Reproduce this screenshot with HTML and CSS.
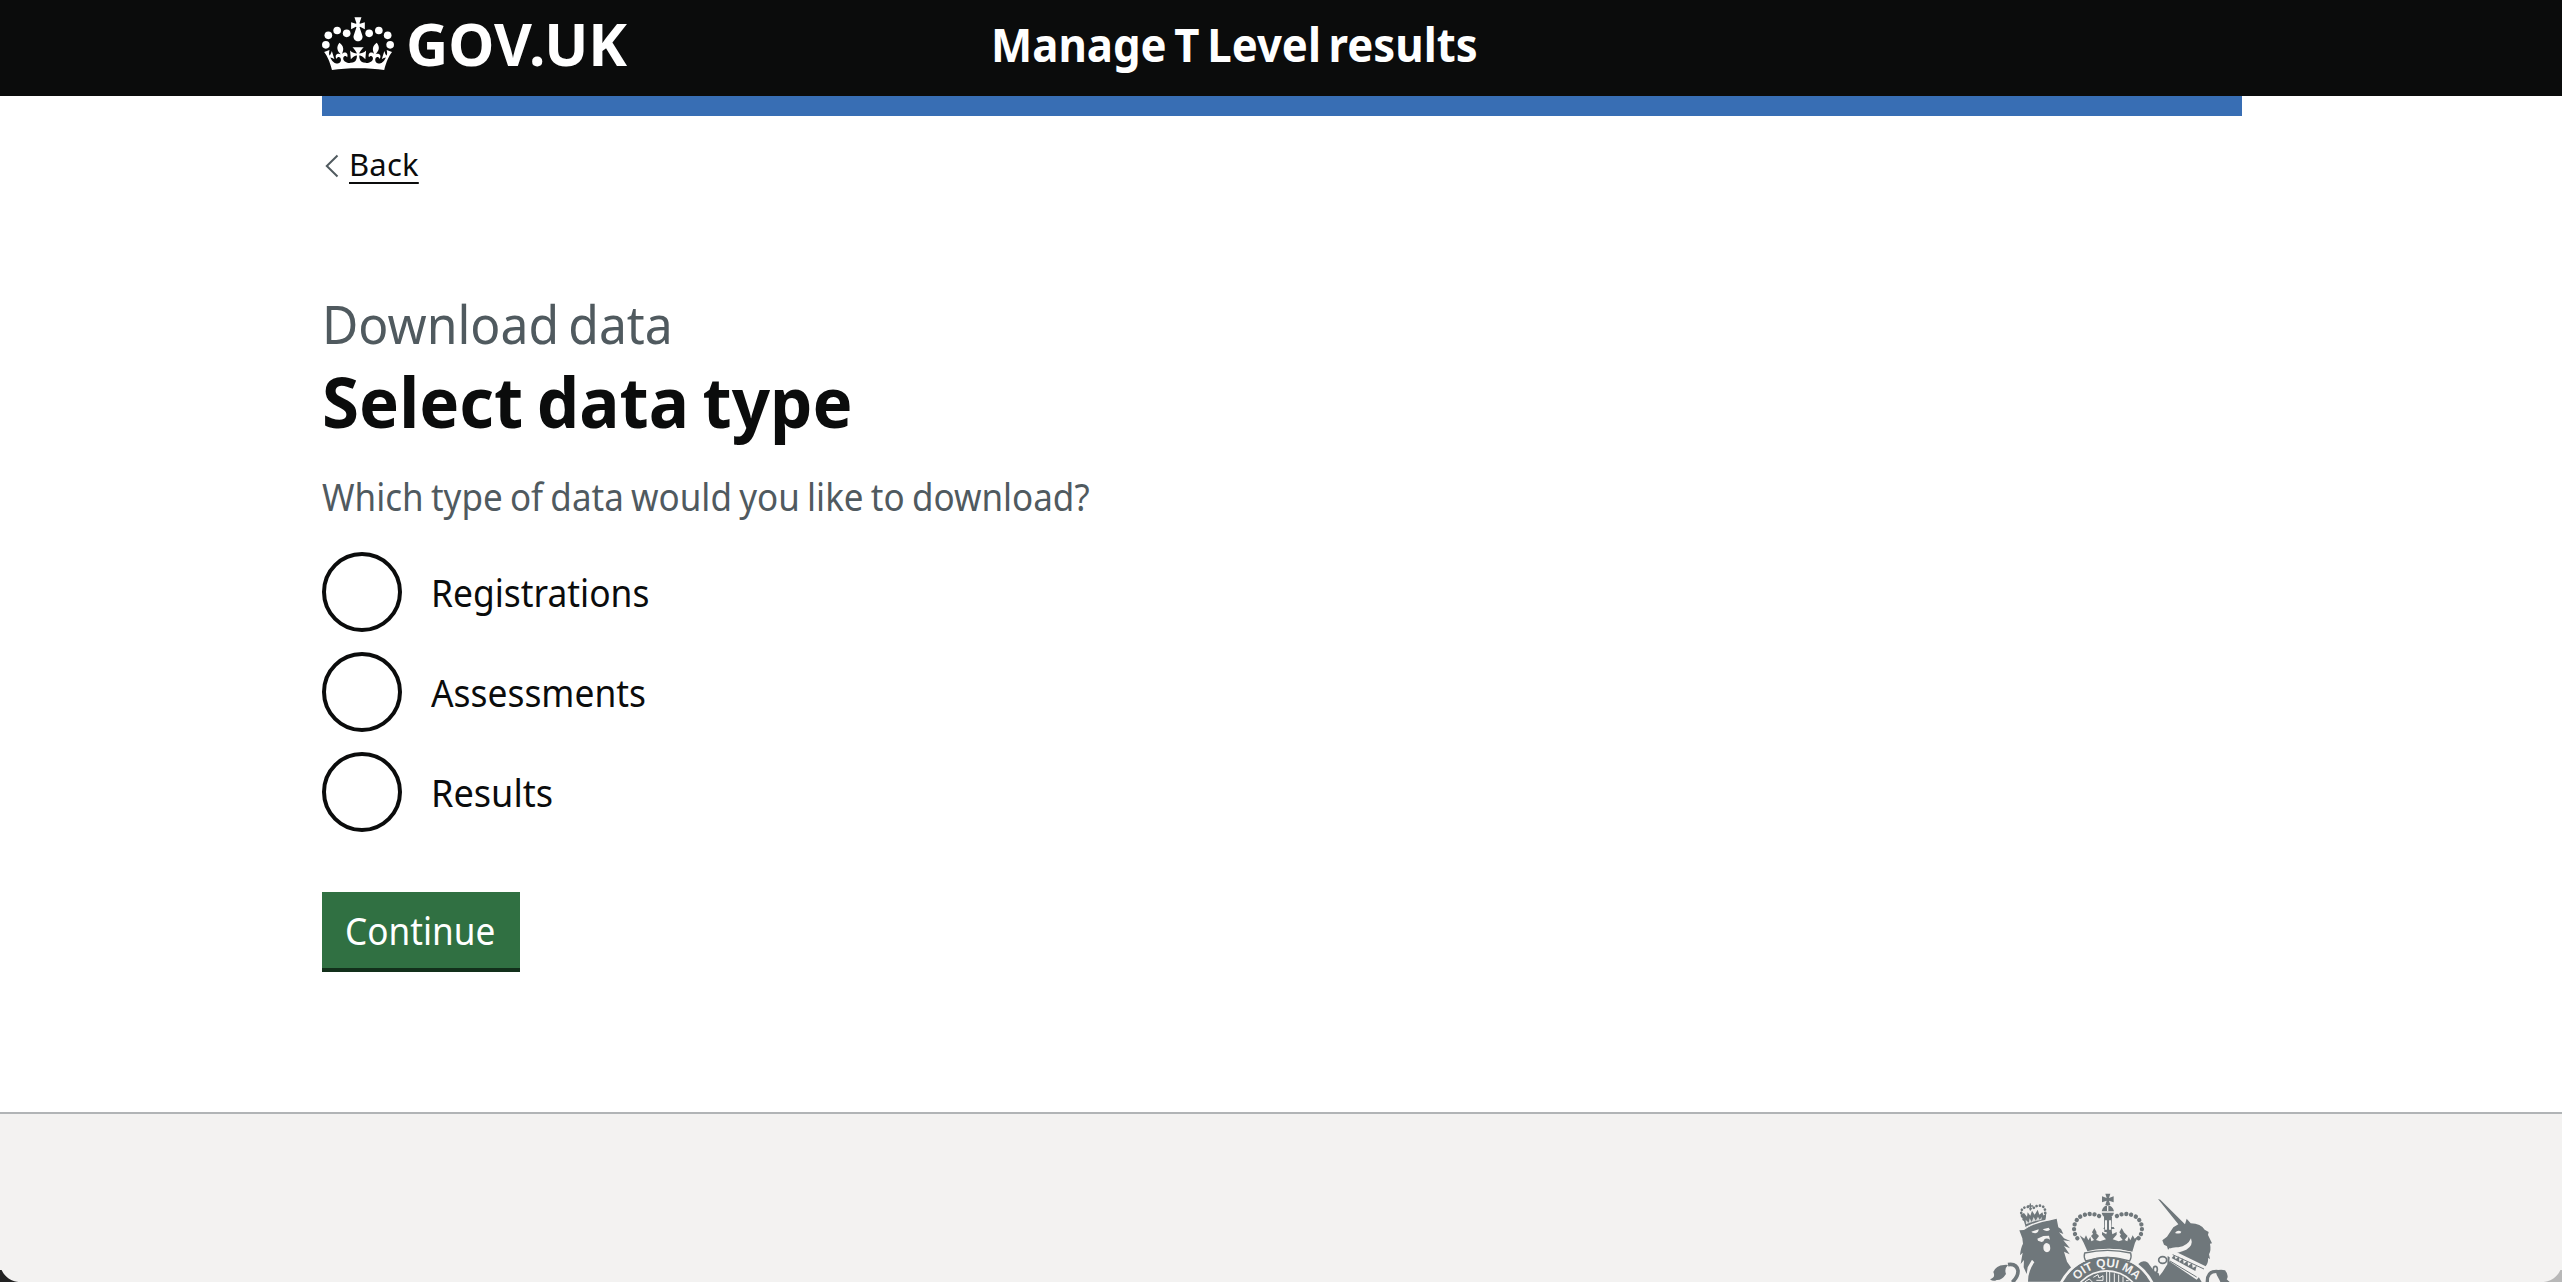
FILE: index.html
```
<!DOCTYPE html>
<html lang="en">
<head>
<meta charset="utf-8">
<title>Select data type - Manage T Level results</title>
<link rel="stylesheet" href="styles.css">
</head>
<body>
<header class="header">
  <a class="logo" aria-label="GOV.UK">
    <svg class="crown" viewBox="66 51 216 159" fill="currentColor" aria-hidden="true">
      <circle cx="77.500" cy="134.500" r="11.500"/><circle cx="85" cy="106" r="11.500"/><circle cx="111.500" cy="91.500" r="11.500"/><circle cx="140" cy="100" r="11.500"/>
      <circle cx="207.500" cy="100" r="11.500"/><circle cx="236.500" cy="91.500" r="11.500"/><circle cx="263" cy="106" r="11.500"/><circle cx="270.500" cy="134.500" r="11.500"/>
      <path transform="translate(74.500 52) scale(3.140 3.050)" d="M33.1,9.8c.2-.1.3-.3.5-.5l4.600,2.400v-6.800l-4.600,1.500c-.1-.2-.3-.3-.5-.5l1.900-5.900h-6.700l1.900,5.900c-.2.1-.3.3-.5.5l-4.600-1.500v6.800l4.600-2.400c.1.2.3.3.5.5l-2.600,8c-.9,2.800,1.200,5.700,4.100,5.700h0c3,0,5.100-2.900,4.100-5.700l-2.600-8Z"/>
      <path transform="translate(72.500 24) scale(3.200 3.100)" d="M37,37.900s-3.400,3.800-4.100,6.100c2.200,0,4.200-.5,6.400-2.800l-.7,8.500c-2-2.800-4.400-4.100-5.700-3.800.1,3.100.5,6.700,5.800,7.200,3.700.3,6.700-1.500,7-3.800.4-2.600-2-4.300-3.700-1.600-1.400-4.500,2.400-6.100,4.900-3.200-1.900-4.500-1.800-7.700,2.400-10.900,3,4,2.600,7.300-1.200,11.100,2.400-1.300,6.200,0,4,4.600-1.200-2.800-3.700-2.200-4.200.2-.3,1.700.7,3.700,3,4.200,1.900.3,4.700-.9,7-5.900-1.300,0-2.400.7-3.900,1.700l2.400-8c.6,2.300,1.400,3.700,2.200,4.500.6-1.600.5-2.800,0-5.300l5,1.800c-2.600,3.600-5.200,8.700-7.300,17.500-7.400-1.100-15.700-1.700-24.500-1.700h0c-8.800,0-17.100.6-24.500,1.700-2.100-8.900-4.700-13.900-7.300-17.500l5-1.800c-.5,2.500-.6,3.700,0,5.300.8-.8,1.600-2.300,2.200-4.500l2.400,8c-1.500-1-2.600-1.700-3.900-1.700,2.300,5,5.200,6.200,7,5.900,2.300-.4,3.300-2.400,3-4.200-.5-2.400-3-3.100-4.200-.2-2.200-4.600,1.600-6,4-4.600-3.700-3.700-4.200-7.100-1.200-11.100,4.200,3.200,4.300,6.400,2.400,10.900,2.500-2.800,6.300-1.300,4.900,3.200-1.800-2.700-4.100-1-3.700,1.600.3,2.300,3.300,4.100,7,3.800,5.400-.5,5.700-4.200,5.800-7.200-1.300-.2-3.700,1-5.700,3.800l-.7-8.500c2.200,2.300,4.200,2.700,6.400,2.800-.7-2.300-4.100-6.100-4.100-6.100h10.600Z"/>
    </svg>
    <span class="logo-text">GOV.UK</span>
  </a>
  <span class="service">Manage T Level results</span>
</header>
<div class="bar"></div>

<main class="main">
  <a class="back">
    <svg class="chevron" viewBox="0 0 14 24" aria-hidden="true"><path d="M12.500 1.500 1.800 12l10.700 10.500" fill="none" stroke="currentColor" stroke-width="2"/></svg>
    <span class="back-text">Back</span>
  </a>
  <div class="caption"><span>Download data</span></div>
  <h1 class="title"><span>Select data type</span></h1>
  <p class="hint"><span>Which type of data would you like to download?</span></p>
  <div class="radios">
    <label class="radio"><span class="dot"></span><span class="label">Registrations</span></label>
    <label class="radio"><span class="dot"></span><span class="label">Assessments</span></label>
    <label class="radio"><span class="dot"></span><span class="label label-short">Results</span></label>
  </div>
  <button class="button" type="button"><span>Continue</span></button>
</main>

<footer class="footer">
  <svg class="arms" viewBox="0 0 900 366" aria-hidden="true">
    <defs><path id="motto" d="M322 439a118 118 0 0 1 236 0"/></defs>
    <g fill="#6f777b">
      <!-- lion -->
      <path d="M196 197l-5-16-10-17 11-5 9 11 2-13 8 10 5-15 8 12 9-15 5 15 9-7 4 10 8-9-2 18-4 14q-29 1-57 14z"/>
      <path d="M178 211l14-1 13-8q38-20 70-22l15-4 5 26 8 5 7 15-13-5 15 18 20 9-22-3 20 24-18-7 17 25-17-8 9 30q20 24 26 60H204q0-32 19-58l-7-8-13 23-3 20-9-20 1-22-10 12 6-34-8 8q2-22 9-35l-2-16z"/>
      <path d="M90 358q18-5 10-22 8-20 32-21 6-2 12 0-12 12-6 27-12 19-28 18-10 6-20-2z"/>
      <path d="M144 314q26-4 30 18 1 17-17 35" fill="none" stroke="#6f777b" stroke-width="11"/>
      <!-- unicorn -->
      <path d="M594 117l7 2 74 74 5-17 12 14q31 1 42 19l12 7-2 9 12 25-6 1q4 20-3 32l3 14-6-3q2 14-7 25l-88-43-12-8-5 6-2-10-6 5-3-10-9-5-5-13 14-11 19-28 15-9z"/>
      <path d="M623 288l90 58 12 20H584l24-31 14-22z"/>
      <path d="M800 358q8-12-5-27-17-4-28 3 2 13 11 25l3 7h28z"/>
      <path d="M742 366q-1-32 27-32 15 0 20 13" fill="none" stroke="#6f777b" stroke-width="10"/>
      <!-- mantling beside the garter -->
      <path d="M535 312q13-14 29-4l14 20 18 12 8 26h-54l5-23-16-16z"/>
      <!-- crown band and crosses -->
      <path d="M371 248l-12-22 14 10 5-10 7 15 6-11 3 14 8-4-9-12 12-12 12 12-9 12 12 4 18-6-12-14v-8l13 7 3-16h-12l3-6h28l3 6-10 0 3 16 13-7v8l-12 14 18 6 12-4-9-12 12-12 12 12-9 12 8 4 4-14 5 11 7-15 6 10 13-10-12 22-8 27q-68-17-134 0z"/>
      <path d="M402 226l-6-9 7-13 7 13-6 9zM484 226l-6-9 7-13 7 13-6 9z"/>
      <!-- orb and cross -->
      <path d="M436 101h15l-4 13 14-5v18l-14-5 4 13h-15l4-13-14 5v-18l14 5zM425 154q4-17 18-18 15 1 19 18zM425 158h37q-4 15-19 16-15-1-18-16z"/>
      <path d="M432 170h24l-2 46h-21z"/>
    </g>
    <g fill="none" stroke="#6f777b" stroke-width="13" stroke-linecap="round">
      <path d="M352 235C335 212 340 178 368 166 394 157 416 164 429 176" stroke-dasharray=".1 14.500"/>
      <path d="M536 235C553 212 548 178 520 166 494 157 472 164 459 176" stroke-dasharray=".1 14.500"/>
    </g>
    <g fill="none" stroke="#6f777b" stroke-width="8" stroke-linecap="round">
      <path d="M191 178C181 160 180 149 195 142 202 139 207 141 212 146" stroke-dasharray=".1 10"/>
      <path d="M254 169C258 151 255 139 241 137 230 136 224 140 219 146" stroke-dasharray=".1 10"/>
      <path d="M211 132v18M204 138h14" stroke-width="4"/>
    </g>
    <g fill="#f3f2f1">
      <path d="M194 202q38-20 78-26l2 4q-42 7-78 25zM214 215l22-7q0 10-10 12-6 0-12-5zM248 208l18-5 4 6q-10 8-22-1zM232 236l18-8 17-1 3 12q-10-7-18 0 1 5-7 7l-11-4zM251 256q7-13 18-2 6 21-8 23-14-3-10-21z"/>
      <path d="M645 219q8-11 19-4-2 9-19 4zM627 266q14-6 28-4 28-4 38-27 8 22-14 34-24 11-46 11z"/>
      <path d="M197 179l9 9 3-13 6 11 6-15 6 11 7-12 5 9 7-9-2 10q-24 3-46 13z" opacity=".8"/>
      <path d="M631 277l108 48-29 34-82-55z"/>
      <path d="M435 181h6v28h-6zM447 181h6v28h-6zM441 138h4v15h-4z"/>
    </g>
    <!-- unicorn collar -->
    <path d="M638 284l94 43M630 303l80 48" fill="none" stroke="#6f777b" stroke-width="3"/>
    <path d="M635 294l8-9 4 13 10-9 1 16 11-10 2 16 12-9 1 16 12-9 2 15 12-7-4 16-70-38z" fill="#6f777b"/>
    <g fill="#f3f2f1" stroke="#6f777b" stroke-width="5"><ellipse cx="608" cy="300" rx="12" ry="10"/><ellipse cx="586" cy="328" rx="6" ry="9"/></g>
    <!-- garter -->
    <circle cx="440" cy="439" r="158" fill="#f3f2f1"/>
    <circle cx="440" cy="439" r="150" fill="#6f777b"/>
    <path d="M370 276q73-20 146 0 6 22-5 33-68-24-136 0-12-12-5-33z" fill="#f3f2f1"/>
    <path d="M374 279q69-16 138 0 4 13-3 24-66-22-132 0-7-11-3-24z" fill="none" stroke="#6f777b" stroke-width="4"/>
    <path d="M320 350A150 150 0 0 1 560 350L540 366H340z" fill="#6f777b"/>
    <circle cx="440" cy="439" r="109" fill="#f3f2f1"/>
    <circle cx="440" cy="439" r="104" fill="#6f777b"/>
    <path d="M440 334v32M449 334v32M374 366l14-9 9 9M400 352l14-8 3 10 12-7v14h-20M463 340v26M476 344v22M489 350v16M498 362h8" fill="none" stroke="#f3f2f1" stroke-width="3"/>
    <text class="motto" text-anchor="middle"><textPath href="#motto" startOffset="50%">OIT QUI MA</textPath></text>
  </svg>
</footer>
<i class="corner corner-left"></i><i class="corner corner-right"></i>
</body>
</html>
```
FILE: styles.css
```
* { box-sizing: border-box; }
body {
  margin: 0;
  height: 1282px;
  overflow: hidden;
  display: flex;
  flex-direction: column;
  background: #fff;
  color: #0b0c0c;
  font: 38px/50px "Noto Sans", sans-serif;
}
.header {
  flex: none;
  height: 96px;
  padding-left: 322px;
  display: flex;
  background: #0b0c0c;
  color: #fff;
}
.logo { width: 669px; display: flex; }
.crown { width: 72px; height: 53px; margin-top: 17px; }
.logo-text {
  margin: 14px 0 0 12px;
  font-size: 58.4px;
  line-height: 60px;
  font-weight: 700;
}
.service {
  margin-top: 16px;
  font-size: 47px;
  line-height: 56px;
  font-weight: 700;
  word-spacing: -4px;
  transform: scaleX(.93);
  transform-origin: left;
}
.bar { flex: none; height: 20px; margin: 0 320px 0 322px; background: #386eb4; }

.main {
  flex: none;
  height: 996px;
  padding: 28px 320px 0 322px;
  display: flex;
  flex-direction: column;
  align-items: flex-start;
}
.back { display: flex; gap: 10px; font-size: 31px; line-height: 40px; letter-spacing: .2px; }
.chevron { width: 14px; height: 24px; margin: 10px 0 0 3px; color: #505a5f; }
.back-text {
  text-decoration: underline;
  text-decoration-thickness: 2px;
  text-underline-offset: 6px;
  text-decoration-skip-ink: none;
}
.caption span, .title span, .hint span, .label, .button span {
  display: inline-block;
  white-space: nowrap;
  transform-origin: left;
}
.caption { margin-top: 110px; font-size: 53px; line-height: 60px; color: #505a5f; }
.caption span { transform: scaleX(.94); word-spacing: -4px; }
.title { margin: 9px 0 0; font-size: 70px; line-height: 76px; font-weight: 700; }
.title span { transform: scaleX(.96); word-spacing: -4px; }
.hint { margin: 32px 0 0; color: #505a5f; }
.hint span { transform: scaleX(.921); word-spacing: -2px; }
.radios { margin-top: 31px; display: flex; flex-direction: column; gap: 20px; }
.radio { display: flex; gap: 29px; height: 80px; line-height: 80px; }
.dot { width: 80px; height: 80px; border: 4px solid #0b0c0c; border-radius: 50%; }
.label { transform: scaleX(.931); }
.label-short { transform: scaleX(.95); }
.button {
  margin-top: 60px;
  width: 198px;
  height: 80px;
  padding: 0 0 0 23px;
  border: 0;
  border-bottom: 4px solid #12301b;
  background: #307042;
  color: #fff;
  font: inherit;
  line-height: 75px;
  text-align: left;
}
.button span { transform: scaleX(.925); }

.footer {
  flex: none;
  height: 170px;
  padding: 46px 302px 0 0;
  display: flex;
  justify-content: flex-end;
  align-items: flex-start;
  border-top: 2px solid #b1b4b6;
  background: #f3f2f1;
}
.arms { width: 300px; height: 122px; }
.motto { font: 700 36px "Liberation Sans", sans-serif; fill: #f3f2f1; }

/* window corners */
.corner { position: absolute; bottom: 0; width: 18px; height: 12px; }
.corner-left { left: 0; background: radial-gradient(circle at 20px -8px, transparent 19.5px, #222 20.5px); }
.corner-right { right: 0; background: radial-gradient(circle at -2px -8px, transparent 19.5px, #b8b8b8 20.5px); }
```
